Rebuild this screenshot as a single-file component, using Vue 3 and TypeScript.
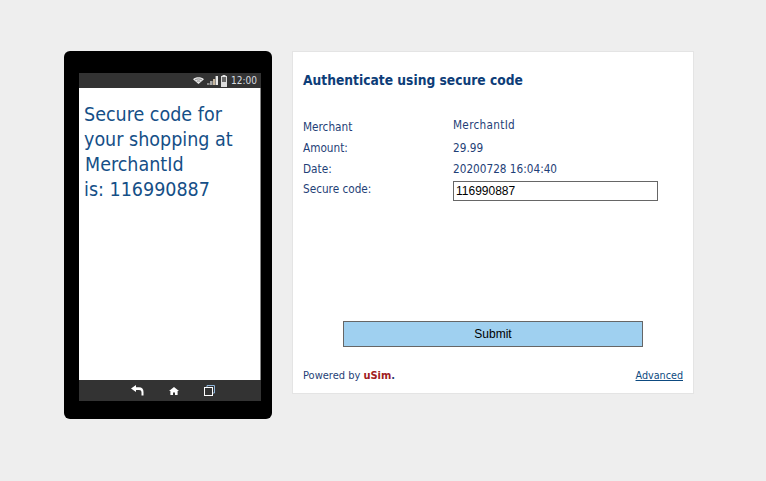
<script setup lang="ts">
const rows: { label: string; value: string; cls?: string }[] = [
  { label: 'Merchant', value: 'MerchantId', cls: 'first' },
  { label: 'Amount:', value: '29.99' },
  { label: 'Date:', value: '20200728 16:04:40' },
]
</script>

<template>
  <div class="page">
    <div class="phone">
      <div class="screen">
        <div class="status">
          <svg class="wifi" width="11" height="7" viewBox="0 0 13 8"><path d="M0 2.5C3.5 -0.5 9.5 -0.5 13 2.5L6.5 8Z" fill="#e8e8e8"/><path d="M2.5 3.2C5 1.8 8 1.8 10.5 3.2" stroke="#555" stroke-width=".8" fill="none"/><path d="M4.5 5C5.8 4.4 7.2 4.4 8.5 5" stroke="#555" stroke-width=".8" fill="none"/></svg>
          <svg class="signal" width="11" height="9" viewBox="0 0 11 9"><rect x="0" y="7" width="2.6" height="2" fill="#8a8a8a"/><rect x="3" y="5" width="2.6" height="4" fill="#a8a8a8"/><rect x="6" y="3" width="2.2" height="6" fill="#c8b8a0"/><rect x="8.6" y="0" width="2.4" height="9" fill="#e8e8e8"/></svg>
          <svg class="battery" width="6" height="12" viewBox="0 0 6 12"><rect x="1.5" y="0" width="3" height="1.4" fill="#ddd"/><rect x=".5" y="1.5" width="5" height="10" fill="#6a6a6a" stroke="#ddd"/><rect x="1" y="7" width="4" height="4" fill="#ddd"/></svg>
          <span class="clock">12:00</span>
        </div>
        <div class="message">
          <div>Secure code for</div>
          <div>your shopping at</div>
          <div class="merchant">MerchantId</div>
          <div>is: 116990887</div>
        </div>
        <div class="navbar">
          <svg width="13" height="11" viewBox="0 0 13 11"><path d="M0 3.5L5 0V2.2H8C11 2.2 12.5 4 12.5 7V10.5H10.5V7.5C10.5 5.8 9.6 5 8 5H5V7Z" fill="#fff"/></svg>
          <svg width="10" height="8" viewBox="0 0 10 8"><path d="M5 0L10 4H8.6V8H6V5.4H4V8H1.4V4H0Z" fill="#fff"/></svg>
          <svg width="11" height="11" viewBox="0 0 11 11"><path d="M3 2.5V.5H10.5V8H8.5" fill="none" stroke="#8fb4d8"/><rect x=".5" y="2.5" width="8" height="8" fill="none" stroke="#fff"/></svg>
        </div>
      </div>
    </div>

    <div class="card">
      <h1 class="title">Authenticate using secure code</h1>
      <div class="details">
        <div v-for="row in rows" :key="row.label" class="row" :class="row.cls">
          <span class="label">{{ row.label }}</span>
          <span class="value">{{ row.value }}</span>
        </div>
        <div class="row code-row">
          <label class="label" for="code">Secure code:</label>
          <input id="code" class="code" type="text" value="116990887" />
        </div>
      </div>
      <button class="submit" type="button">Submit</button>
      <div class="footer">
        <span>Powered by <b class="brand">uSim</b><b>.</b></span>
        <a class="advanced" href="#">Advanced</a>
      </div>
    </div>
  </div>
</template>

<style>
html, body {
  margin: 0;
  background: #eeeeee;
}
</style>

<style scoped>
.page {
  box-sizing: border-box;
  width: 766px;
  height: 481px;
  padding: 51px 0 0 64px;
  display: flex;
  align-items: flex-start;
  gap: 20px;
  background: #eeeeee;
  font-family: "DejaVu Sans Condensed", "DejaVu Sans", sans-serif;
  font-stretch: condensed;
  color: #1f3f77;
}
.phone {
  box-sizing: border-box;
  width: 208px;
  height: 368px;
  padding: 22px 11px 18px 15px;
  background: #000;
  border-radius: 6px;
}
.screen {
  height: 100%;
  display: flex;
  flex-direction: column;
  background: #fff;
  border-right: 1px solid #888;
  box-sizing: border-box;
  width: 182px;
}
.status {
  height: 15px;
  margin-right: -1px;
  flex: none;
  background: #333;
  display: flex;
  align-items: center;
  justify-content: flex-end;
  padding-right: 4px;
}
.wifi { margin-right: 3px; }
.signal { margin-right: 3px; }
.battery { margin-right: 4px; }
.clock {
  font-size: 10px;
  color: #d8dde0;
  line-height: 15px;
}
.message {
  flex: 1;
  padding: 14px 0 0 5px;
  font-size: 19.5px;
  line-height: 25px;
  color: #154f87;
}
.merchant {
  padding-left: 1px;
}
.navbar {
  flex: none;
  height: 21px;
  margin-right: -1px;
  background: #333;
  display: flex;
  align-items: center;
  justify-content: center;
  gap: 25px;
  padding-left: 6px;
}
.card {
  box-sizing: border-box;
  width: 402px;
  height: 343px;
  padding: 19px 10px 0;
  background: #fff;
  border: 1px solid #e4e4e4;
  display: flex;
  flex-direction: column;
}
.title {
  margin: 0;
  font-size: 13.7px;
  line-height: 18px;
  font-weight: 700;
  color: #0d3d78;
}
.details {
  margin-top: 28px;
  font-size: 11.7px;
  line-height: 21px;
}
.row {
  display: flex;
  height: 21px;
}
.first .value {
  margin-top: -2px;
  letter-spacing: 0.3px;
}
.label {
  width: 150px;
  flex: none;
}
.code-row .label { margin-top: -1px; }
.code {
  box-sizing: border-box;
  width: 205px;
  height: 20px;
  margin-top: 1px;
  padding: 0 2px;
  border: 1px solid #666;
  border-radius: 0;
  outline: none;
  font-family: "Liberation Sans", Arial, sans-serif;
  font-size: 12px;
  color: #000;
  background: #fff;
}
.submit {
  box-sizing: border-box;
  align-self: flex-start;
  width: 300px;
  height: 26px;
  margin: 120px 0 0 40px;
  padding: 0;
  border: 1px solid #666;
  border-radius: 0;
  background: #9fd0f0;
  font-family: "Liberation Sans", Arial, sans-serif;
  font-size: 12px;
  color: #000;
}
.footer {
  margin-top: 21px;
  display: flex;
  justify-content: space-between;
  font-size: 11px;
  line-height: 16px;
}
.brand { color: #a02020; }
.advanced { color: #0d4a80; text-decoration: underline; font-size: 10.7px; }
</style>
